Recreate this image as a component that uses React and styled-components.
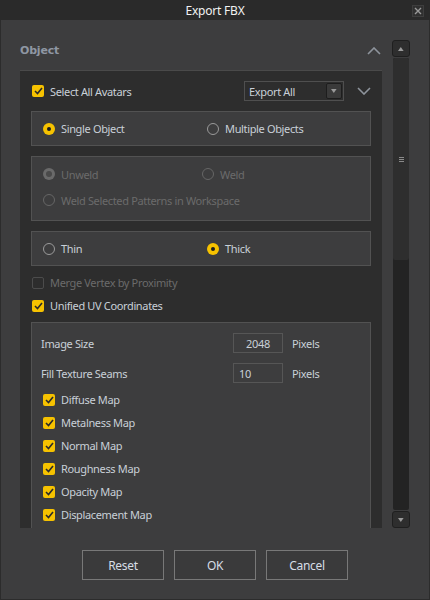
import React from 'react';
import styled, { createGlobalStyle, css } from 'styled-components';

const GlobalStyle = createGlobalStyle`
  html, body {
    margin: 0;
    padding: 0;
    background: #3d3d3e;
  }
  body {
    font-family: "Noto Sans", "Liberation Sans", sans-serif;
    font-size: 11px;
    letter-spacing: -0.35px;
    color: #c9d0d8;
  }
`;

const yellow = '#f6c200';

export const Window = styled.div`
  width: 430px;
  height: 600px;
  display: flex;
  flex-direction: column;
  background: #3d3d3e;
  box-sizing: border-box;
  overflow: hidden;
`;

export const TitleBar = styled.div`
  height: 20px;
  flex: none;
  background: #2a2a2a;
  display: flex;
  align-items: center;
  justify-content: center;
  position: relative;
  color: #f2f2f2;
  font-size: 12px;
  letter-spacing: -0.2px;
`;

export const CloseButton = styled.div`
  position: absolute;
  right: 6px;
  top: 5px;
  width: 10px;
  height: 10px;
  border: 1px solid #3e3e3e;
  background: #303030;
  display: flex;
  align-items: center;
  justify-content: center;
`;

export const Body = styled.div`
  flex: 1;
  display: flex;
  flex-direction: column;
  border-left: 1px solid #2c2c2c;
  border-right: 1px solid #2c2c2c;
  border-bottom: 1px solid #2c2c2c;
`;

export const Main = styled.div`
  display: flex;
  padding: 20px 0 0 19px;
  gap: 10px;
`;

export const Column = styled.div`
  width: 362px;
  display: flex;
  flex-direction: column;
`;

export const SectionHeader = styled.div`
  height: 30px;
  display: flex;
  justify-content: space-between;
  padding-top: 4px;
  box-sizing: border-box;
  color: #8f97a3;
  font-family: "DejaVu Sans", sans-serif;
  font-weight: bold;
  font-size: 11px;
  letter-spacing: -0.2px;
  svg {
    margin-right: 1px;
    margin-top: 3px;
  }
`;

export const Viewport = styled.div`
  height: 458px;
  background: #2d2d2d;
  border-top: 1px solid #4a4a4a;
  box-sizing: border-box;
  overflow: hidden;
  padding: 10px 11px 0 11px;
  display: flex;
  flex-direction: column;
`;

export const TopRow = styled.div`
  height: 20px;
  display: flex;
  align-items: center;
  padding-left: 1px;
  margin-bottom: 10px;
`;

export const Grow = styled.div`
  flex: 1;
`;

export const Dropdown = styled.div`
  width: 100px;
  height: 20px;
  box-sizing: border-box;
  border: 1px solid #4f4f4f;
  display: flex;
  align-items: center;
  justify-content: space-between;
  padding: 0 1px 0 4px;
  color: #c9d0d8;
  margin-right: 13px;
`;

export const DropButton = styled.div`
  width: 14px;
  height: 14px;
  border: 1px solid #1d1d1d;
  border-radius: 2px;
  background: #3a3a3a;
  display: flex;
  align-items: center;
  justify-content: center;
`;

export const Group = styled.div`
  border: 1px solid #525252;
  background: #3d3d3e;
  box-sizing: border-box;
  height: ${p => p.h}px;
  margin-top: ${p => p.mt || 0}px;
  margin-bottom: ${p => p.mb ?? 10}px;
  padding: ${p => p.pad || '0 11px'};
  display: flex;
  flex-direction: column;
  justify-content: ${p => (p.center ? 'center' : 'flex-start')};
  gap: ${p => p.gap || 0}px;
  flex: none;
`;

export const RadioRow = styled.div`
  display: flex;
  align-items: center;
`;

export const RadioCell = styled.label`
  display: flex;
  align-items: center;
  gap: 6px;
  width: ${p => p.w || 'auto'};
  color: ${p => (p.disabled ? '#6b6b6b' : '#c9d0d8')};
  height: 16px;
`;

export const RadioDot = styled.span`
  width: 12px;
  height: 12px;
  border-radius: 50%;
  box-sizing: border-box;
  flex: none;
  position: relative;
  border: 1px solid #9a9a9a;
  ${p =>
    p.checked &&
    css`
      border: none;
      background: ${yellow};
      &::after {
        content: '';
        position: absolute;
        left: 4px;
        top: 4px;
        width: 4px;
        height: 4px;
        border-radius: 50%;
        background: #1e1e1e;
      }
    `}
  ${p =>
    p.disabled &&
    css`
      border: 1px solid #666;
      background: transparent;
    `}
  ${p =>
    p.disabled &&
    p.checked &&
    css`
      border: none;
      background: #6a6a6a;
      &::after {
        content: '';
        position: absolute;
        left: 3px;
        top: 3px;
        width: 6px;
        height: 6px;
        border-radius: 50%;
        background: #4a4a4a;
      }
    `}
`;

export const CheckRow = styled.label`
  display: flex;
  align-items: center;
  gap: 6px;
  height: ${p => p.h || 23}px;
  color: ${p => (p.disabled ? '#6b6b6b' : '#c9d0d8')};
  padding-left: ${p => p.indent ?? 1}px;
  flex: none;
`;

export const Box = styled.span`
  width: 12px;
  height: 12px;
  box-sizing: border-box;
  border-radius: 2px;
  flex: none;
  display: flex;
  align-items: center;
  justify-content: center;
  ${p =>
    p.checked
      ? css`
          background: ${yellow};
        `
      : css`
          border: 1px solid #4c4c4c;
        `}
`;

export const FieldRow = styled.div`
  display: flex;
  align-items: center;
  height: 30px;
  flex: none;
`;

export const FieldLabel = styled.div`
  width: 192px;
`;

export const Input = styled.div`
  width: 50px;
  height: 20px;
  box-sizing: border-box;
  border: 1px solid #565656;
  display: flex;
  align-items: center;
  justify-content: ${p => (p.center ? 'center' : 'flex-start')};
  padding-left: ${p => (p.center ? 0 : 5)}px;
  margin-right: 9px;
`;

export const ScrollBar = styled.div`
  width: 18px;
  height: 488px;
  display: flex;
  flex-direction: column;
`;

export const ScrollButton = styled.div`
  height: 17px;
  flex: none;
  box-sizing: border-box;
  border: 1px solid #1f1f1f;
  border-radius: 3px;
  background: #2e2e2e;
  display: flex;
  align-items: center;
  justify-content: center;
`;

export const Track = styled.div`
  flex: 1;
  margin: 1px 1px;
  background: #232323;
  border-radius: 2px;
  display: flex;
  flex-direction: column;
`;

export const Thumb = styled.div`
  height: 202px;
  background: #2e2e2e;
  border-radius: 2px;
  display: flex;
  align-items: center;
  justify-content: center;
`;

export const Footer = styled.div`
  display: flex;
  justify-content: center;
  gap: 10px;
  margin-top: 22px;
`;

export const Button = styled.button`
  width: 82px;
  height: 30px;
  background: #3a3a3b;
  border: 1px solid #787878;
  color: #d6dde5;
  font-family: "Noto Sans", sans-serif;
  font-size: 12px;
  letter-spacing: -0.3px;
  padding: 0;
`;

const Check = () => (
  <svg width="9" height="8" viewBox="0 0 9 8">
    <path d="M1 4 L3.5 6.5 L8 1" fill="none" stroke="#2a2a2a" strokeWidth="1.6" />
  </svg>
);

const Tri = ({ up, color = '#aaa', size = 5 }) => (
  <svg width={size * 1.4} height={size} viewBox="0 0 7 5">
    <path d={up ? 'M0 5 L3.5 0 L7 5 Z' : 'M0 0 L3.5 5 L7 0 Z'} fill={color} />
  </svg>
);

const Chevron = ({ up }) => (
  <svg width="14" height="8" viewBox="0 0 14 8">
    <path d={up ? 'M1 7 L7 1 L13 7' : 'M1 1 L7 7 L13 1'} fill="none" stroke="#8e949c" strokeWidth="1.6" />
  </svg>
);

const Radio = ({ label, checked, disabled, w }) => (
  <RadioCell w={w} disabled={disabled}>
    <RadioDot checked={checked} disabled={disabled} />
    {label}
  </RadioCell>
);

const CheckItem = ({ label, checked = true, disabled, h, indent }) => (
  <CheckRow disabled={disabled} h={h} indent={indent}>
    <Box checked={checked}>{checked && <Check />}</Box>
    {label}
  </CheckRow>
);

const maps = ['Diffuse Map', 'Metalness Map', 'Normal Map', 'Roughness Map', 'Opacity Map', 'Displacement Map'];

export default function App() {
  return (
    <>
      <GlobalStyle />
      <Window>
        <TitleBar>
          Export FBX
          <CloseButton>
            <svg width="8" height="8" viewBox="0 0 8 8">
              <path d="M1 1 L7 7 M7 1 L1 7" stroke="#9a9a9a" strokeWidth="1.4" />
            </svg>
          </CloseButton>
        </TitleBar>
        <Body>
          <Main>
            <Column>
              <SectionHeader>
                <span>Object</span>
                <Chevron up />
              </SectionHeader>
              <Viewport>
                <TopRow>
                  <CheckItem label="Select All Avatars" h={20} indent={0} />
                  <Grow />
                  <Dropdown>
                    Export All
                    <DropButton>
                      <Tri color="#9a9a9a" size={4} />
                    </DropButton>
                  </Dropdown>
                  <Chevron />
                </TopRow>
                <Group h={35} center>
                  <RadioRow>
                    <Radio label="Single Object" checked w="164px" />
                    <Radio label="Multiple Objects" />
                  </RadioRow>
                </Group>
                <Group h={65} pad="9px 11px 0" gap={10}>
                  <RadioRow>
                    <Radio label="Unweld" checked disabled w="159px" />
                    <Radio label="Weld" disabled />
                  </RadioRow>
                  <RadioRow>
                    <Radio label="Weld Selected Patterns in Workspace" disabled />
                  </RadioRow>
                </Group>
                <Group h={35} center mb={5}>
                  <RadioRow>
                    <Radio label="Thin" w="164px" />
                    <Radio label="Thick" checked />
                  </RadioRow>
                </Group>
                <CheckItem label="Merge Vertex by Proximity" checked={false} disabled />
                <CheckItem label="Unified UV Coordinates" />
                <Group h={220} pad="5px 11px 0 9px" mb={0} mt={5}>
                  <FieldRow>
                    <FieldLabel>Image Size</FieldLabel>
                    <Input center>2048</Input>
                    Pixels
                  </FieldRow>
                  <FieldRow>
                    <FieldLabel>Fill Texture Seams</FieldLabel>
                    <Input>10</Input>
                    Pixels
                  </FieldRow>
                  {maps.map(m => (
                    <CheckItem key={m} label={m} indent={2} />
                  ))}
                </Group>
              </Viewport>
            </Column>
            <ScrollBar>
              <ScrollButton>
                <Tri up color="#9a9a9a" size={4} />
              </ScrollButton>
              <Track>
                <Thumb>
                  <svg width="5" height="5" viewBox="0 0 5 5">
                    <path d="M0 0.5 H5 M0 2.5 H5 M0 4.5 H5" stroke="#8a8a8a" strokeWidth="1" />
                  </svg>
                </Thumb>
              </Track>
              <ScrollButton>
                <Tri color="#9a9a9a" size={4} />
              </ScrollButton>
            </ScrollBar>
          </Main>
          <Footer>
            <Button>Reset</Button>
            <Button>OK</Button>
            <Button>Cancel</Button>
          </Footer>
        </Body>
      </Window>
    </>
  );
}
